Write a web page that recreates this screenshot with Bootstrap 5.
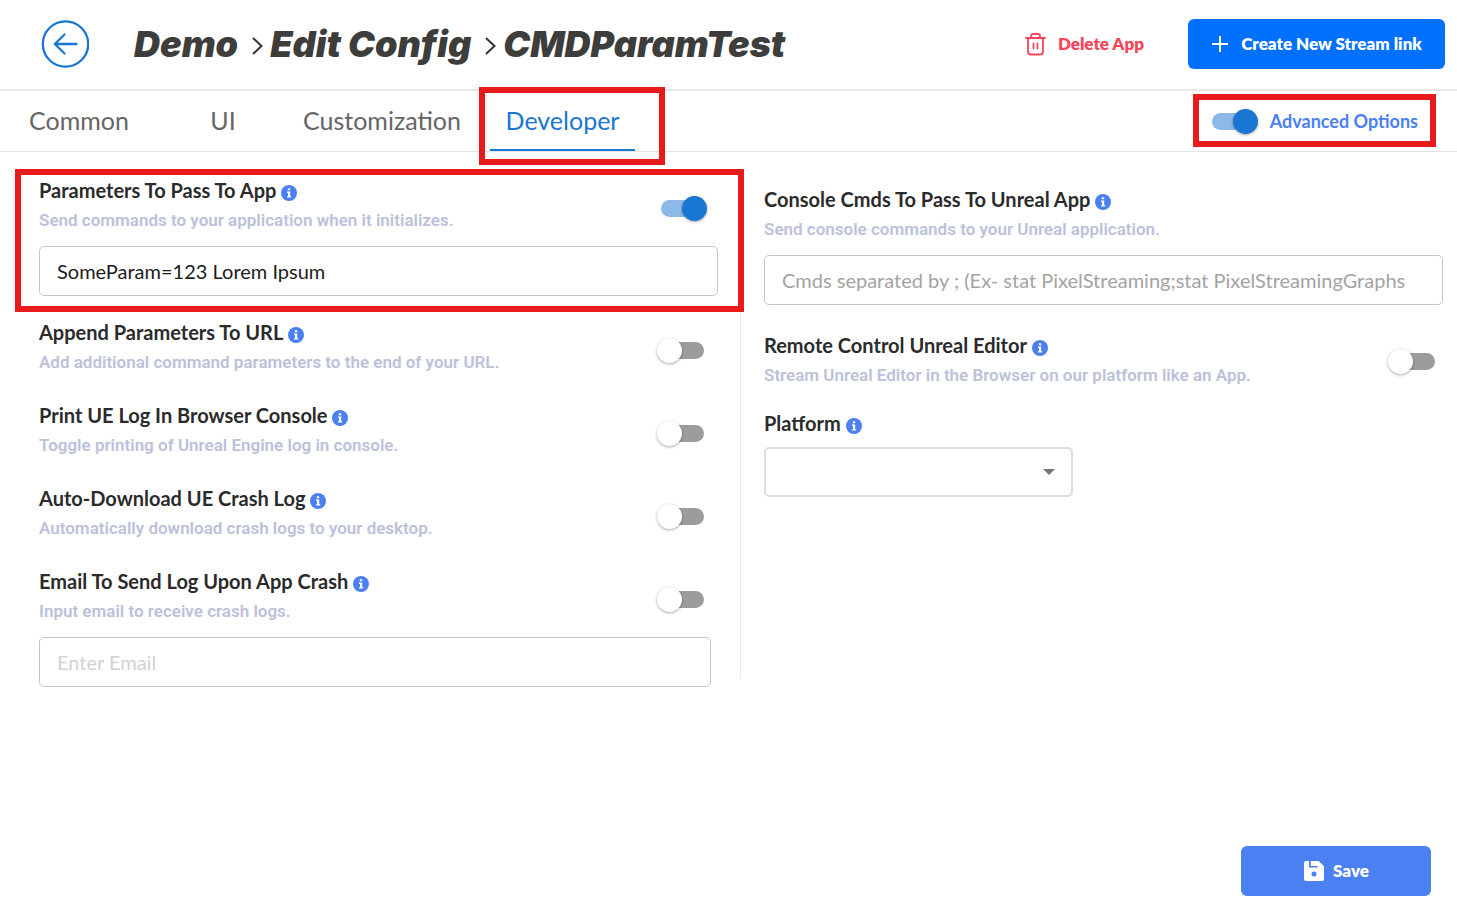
<!DOCTYPE html>
<html lang="en">
<head>
<meta charset="utf-8">
<meta name="viewport" content="width=device-width, initial-scale=1">
<title>Demo - Edit Config</title>
<link href="https://cdn.jsdelivr.net/npm/bootstrap@5.3.0/dist/css/bootstrap.min.css" rel="stylesheet">
<style>
  body { font-family: Lato, Roboto, sans-serif; color: #2b2b2b; background: #fff; }

  /* Header */
  .app-header { min-height: 91px; padding: 0 12px 2px 41px; border-bottom: 2px solid #e6e6e6; }
  .back-btn { width: 48px; height: 48px; }
  .crumbs { font: italic 900 36px/44px Inter, sans-serif; color: #3d3d3b; margin-left: 45px; }
  .crumbs a { color: inherit; text-decoration: none; }
  .crumbs svg { margin: 4px 7px 0 14px; }
  .delete-btn { color: #f5475b; font-size: 17px; font-weight: 800; margin-right: 44px; }
  .create-btn, .save-btn { height: 50px; font-size: 17px; font-weight: 800; color: #fff; border-radius: 6px; }
  .create-btn { background: #0070ff; width: 257px; }
  .save-btn { background: #4a80f2; width: 190px; }

  /* Tabs */
  .tab-strip { min-height: 61px; border-bottom: 1px solid #e3e3e3; padding-right: 39px; }
  .tab-grid { display: grid; grid-template-columns: 158px 130px 188px 173px; align-self: stretch; }
  .tab-link { font-size: 25px; line-height: 30px; color: #666; text-decoration: none; text-align: center; padding: 14px 0; }
  .tab-link.current { color: #1976d2; margin: 0 14px; border-bottom: 2px solid #1976d2; }
  .advanced-label { color: #4a80f2; font-size: 18px; font-weight: 700; margin-left: 12px; }

  /* Red outlines drawn over the page */
  .outlined { position: relative; }
  .outlined::after { content: ""; position: absolute; border: 6px solid #e81a1c; pointer-events: none; z-index: 2; }
  .outline-tab::after { inset: -4px -30px -16px -11px; }
  .outline-advanced::after { inset: -14px -18px -12px -15px; }
  .outline-params::after { inset: -9px -26px -16px -24px; }

  /* Settings */
  .settings { padding: 26px 14px 0 39px; }
  .left-col { padding: 0 22px 0 0; border-right: 1px solid #ececec; }
  .right-col { padding: 9px 0 0 23px; }
  .setting-title { font-size: 20px; line-height: 24px; font-weight: 700; margin: 0 0 6px; }
  .setting-note { font: 600 17px/24px Roboto, sans-serif; color: #bcc1da; margin: 0; }
  .stack-left { gap: 29px; margin-top: 24px; }
  .left-switch { margin: 18px 11px 0 0; }
  .right-switch { margin-right: 5px; }
  .text-field { height: 50px; font-size: 20px; padding: 0 17px; border: 1px solid #c6c6c6; border-radius: 5px; color: #1c1c1c; margin-top: 14px; }
  .text-field::placeholder { color: #a3a3a3; }
  .text-field.faint::placeholder { color: #d2d2d2; }
  .email-wrap { padding-right: 7px; margin-bottom: -9px; }
  .platform-select { width: 309px; height: 50px; border: 2px solid #dedede; border-radius: 5px; margin-top: 12px;
    background-image: url("data:image/svg+xml,%3Csvg xmlns='http://www.w3.org/2000/svg' viewBox='0 0 12 6'%3E%3Cpath d='M0 0h12L6 6z' fill='%23757575'/%3E%3C/svg%3E");
    background-size: 12px 6px; background-position: right 16px center; }

  .toggle { appearance: none; position: relative; flex: none; width: 50px; height: 25px; background: none; border: 0; cursor: pointer; }
  .toggle::before { content: ""; position: absolute; left: 4px; top: 4px; width: 43px; height: 17px; border-radius: 9px; background: #9c9c9c; }
  .toggle::after { content: ""; position: absolute; left: 0; top: 0; width: 25px; height: 25px; border-radius: 50%; background: #fff; box-shadow: 0 1px 3px rgba(0,0,0,.35); }
  .toggle:checked::before { background: #8cb9e8; }
  .toggle:checked::after { left: 25px; background: #1976d2; }

  .save-row { padding: 168px 26px 26px 0; }
</style>
</head>
<body>
<svg class="d-none" aria-hidden="true">
  <symbol id="info" viewBox="0 0 16 16">
    <circle cx="8" cy="8" r="8" fill="#4a80f2"/>
    <path fill="#fff" d="M6.800 3.200h2.400v2.100H6.800zM6 6.600h3.200v4.600h1v1.400H6v-1.400h1V8H6z"/>
  </symbol>
  <symbol id="chevron" viewBox="0 0 11 18">
    <path d="M1 1l8.500 8L1 17" fill="none" stroke="#333" stroke-width="2"/>
  </symbol>
</svg>

<header class="app-header d-flex align-items-center">
  <button type="button" class="btn p-0 border-0 back-btn" aria-label="Back">
    <svg class="d-block" width="48" height="48" viewBox="0 0 48 48" fill="none" stroke="#1976d2" stroke-width="2.300" stroke-linecap="round" stroke-linejoin="round">
      <circle cx="24.500" cy="24" r="22.700"/>
      <path d="M35.500 24H14M23.500 14.500L13.800 24l9.700 9.500"/>
    </svg>
  </button>
  <nav class="crumbs d-flex align-items-center" aria-label="Breadcrumb">
    <a href="#">Demo</a>
    <svg width="11" height="18"><use href="#chevron"/></svg>
    <a href="#">Edit Config</a>
    <svg width="11" height="18"><use href="#chevron"/></svg>
    <span>CMDParamTest</span>
  </nav>
  <button type="button" class="btn delete-btn d-flex align-items-center p-0 border-0 ms-auto">
    <svg class="me-2" width="26" height="24" viewBox="0 0 26 24" fill="none" stroke="#f5475b" stroke-width="1.800" stroke-linecap="round" stroke-linejoin="round">
      <path d="M2 6h19M4 6v13.500a3 3 0 0 0 3 3h9a3 3 0 0 0 3-3V6M7 6V4a2 2 0 0 1 2-2h5a2 2 0 0 1 2 2v2M9.500 11.500v5M13.500 11.500v5"/>
    </svg>
    Delete App
  </button>
  <button type="button" class="btn create-btn d-flex align-items-center justify-content-center border-0">
    <svg class="me-2" width="22" height="18" viewBox="0 0 22 18" stroke="#fff" stroke-width="2"><path d="M1 9h16M9 1v16"/></svg>
    Create New Stream link
  </button>
</header>

<div class="tab-strip d-flex align-items-center">
  <nav class="tab-grid" aria-label="Sections">
    <a href="#" class="tab-link">Common</a>
    <a href="#" class="tab-link">UI</a>
    <a href="#" class="tab-link">Customization</a>
    <a href="#" class="tab-link current outlined outline-tab" aria-current="page">Developer</a>
  </nav>
  <div class="outlined outline-advanced d-flex align-items-center ms-auto">
    <input type="checkbox" role="switch" class="toggle" id="advanced" checked>
    <label for="advanced" class="advanced-label">Advanced Options</label>
  </div>
</div>

<main>
  <div class="settings">
    <div class="row g-0">
      <section class="col-6 left-col">
        <div class="outlined outline-params">
          <div class="d-flex justify-content-between align-items-start">
            <div>
              <h2 class="setting-title"><label for="params-on">Parameters To Pass To App</label> <svg width="16" height="16"><use href="#info"/></svg></h2>
              <p class="setting-note">Send commands to your application when it initializes.</p>
            </div>
            <input type="checkbox" role="switch" class="toggle left-switch" id="params-on" checked>
          </div>
          <input type="text" class="form-control text-field" aria-label="Parameters" value="SomeParam=123 Lorem Ipsum">
        </div>
        <div class="d-flex flex-column stack-left">
          <div class="d-flex justify-content-between align-items-start">
            <div>
              <h2 class="setting-title"><label for="append">Append Parameters To URL</label> <svg width="16" height="16"><use href="#info"/></svg></h2>
              <p class="setting-note">Add additional command parameters to the end of your URL.</p>
            </div>
            <input type="checkbox" role="switch" class="toggle left-switch" id="append">
          </div>
          <div class="d-flex justify-content-between align-items-start">
            <div>
              <h2 class="setting-title"><label for="print-log">Print UE Log In Browser Console</label> <svg width="16" height="16"><use href="#info"/></svg></h2>
              <p class="setting-note">Toggle printing of Unreal Engine log in console.</p>
            </div>
            <input type="checkbox" role="switch" class="toggle left-switch" id="print-log">
          </div>
          <div class="d-flex justify-content-between align-items-start">
            <div>
              <h2 class="setting-title"><label for="crash-log">Auto-Download UE Crash Log</label> <svg width="16" height="16"><use href="#info"/></svg></h2>
              <p class="setting-note">Automatically download crash logs to your desktop.</p>
            </div>
            <input type="checkbox" role="switch" class="toggle left-switch" id="crash-log">
          </div>
          <div>
            <div class="d-flex justify-content-between align-items-start">
              <div>
                <h2 class="setting-title"><label for="email-on">Email To Send Log Upon App Crash</label> <svg width="16" height="16"><use href="#info"/></svg></h2>
                <p class="setting-note">Input email to receive crash logs.</p>
              </div>
              <input type="checkbox" role="switch" class="toggle left-switch" id="email-on">
            </div>
            <div class="email-wrap"><input type="email" class="form-control text-field faint" aria-label="Email" placeholder="Enter Email"></div>
          </div>
        </div>
      </section>

      <section class="col-6 right-col">
        <h2 class="setting-title"><label for="cmds">Console Cmds To Pass To Unreal App</label> <svg width="16" height="16"><use href="#info"/></svg></h2>
        <p class="setting-note">Send console commands to your Unreal application.</p>
        <input type="text" class="form-control text-field" id="cmds" placeholder="Cmds separated by ; (Ex- stat PixelStreaming;stat PixelStreamingGraphs">
        <div class="d-flex justify-content-between align-items-start mt-4 pt-1">
          <div>
            <h2 class="setting-title"><label for="remote">Remote Control Unreal Editor</label> <svg width="16" height="16"><use href="#info"/></svg></h2>
            <p class="setting-note">Stream Unreal Editor in the Browser on our platform like an App.</p>
          </div>
          <input type="checkbox" role="switch" class="toggle right-switch mt-3" id="remote">
        </div>
        <h2 class="setting-title mt-4"><label for="platform">Platform</label> <svg width="16" height="16"><use href="#info"/></svg></h2>
        <select class="form-select platform-select" id="platform"><option value=""></option></select>
      </section>
    </div>
  </div>
  <div class="save-row d-flex justify-content-end">
    <button type="button" class="btn save-btn d-flex align-items-center justify-content-center border-0">
      <svg class="me-2" width="22" height="22" viewBox="0 0 22 22">
        <path fill="#fff" d="M3 1h3v6.500h8.500V6H7.700V1h8L21 6.300V19a2 2 0 0 1-2 2H3a2 2 0 0 1-2-2V3a2 2 0 0 1 2-2z"/>
        <circle cx="11" cy="14" r="2.500" fill="#4a80f2"/>
      </svg>
      Save
    </button>
  </div>
</main>
<script src="https://cdn.jsdelivr.net/npm/bootstrap@5.3.0/dist/js/bootstrap.bundle.min.js"></script>
</body>
</html>
